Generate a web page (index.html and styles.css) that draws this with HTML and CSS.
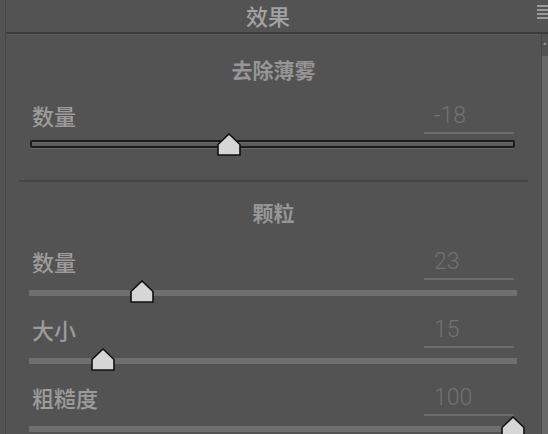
FILE: index.html
```html
<!DOCTYPE html>
<html lang="zh-CN">
<head>
<meta charset="utf-8">
<title>效果</title>
<link rel="stylesheet" href="styles.css">
</head>
<body>
<div class="app">
  <div class="side"></div>
  <div class="main">
    <header class="head">
      <h1 class="head-title">效果</h1>
      <div class="menu">
        <svg class="menu-icon" width="11" height="16" viewBox="0 0 11 16">
          <rect x="0" y="0" width="11" height="2" fill="#9a9a9a"/>
          <rect x="0" y="4" width="11" height="2" fill="#9a9a9a"/>
          <rect x="0" y="8" width="11" height="2" fill="#9a9a9a"/>
          <rect x="0" y="12" width="11" height="2" fill="#9a9a9a"/>
        </svg>
      </div>
    </header>
    <div class="body">
      <div class="content">
        <section class="group">
          <h2 class="group-title">去除薄雾</h2>
          <div class="ctl ctl-first">
            <div class="ctl-top">
              <span class="ctl-label">数量</span>
              <span class="ctl-value">-18</span>
            </div>
            <div class="slider slider-outlined">
              <div class="track track-outlined"></div>
              <svg class="thumb" style="--v:0.41" width="24" height="23" viewBox="0 0 24 23"><polygon points="12,1 23,11.5 23,22 1,22 1,11.5" fill="#d6d6d6" stroke="#111" stroke-width="1.6"/></svg>
            </div>
          </div>
        </section>
        <hr class="divider">
        <section class="group group-second">
          <h2 class="group-title">颗粒</h2>
          <div class="ctl ctl-spaced">
            <div class="ctl-top">
              <span class="ctl-label">数量</span>
              <span class="ctl-value">23</span>
            </div>
            <div class="slider">
              <div class="track"></div>
              <svg class="thumb" style="--v:0.23" width="24" height="23" viewBox="0 0 24 23"><polygon points="12,1 23,11.5 23,22 1,22 1,11.5" fill="#d6d6d6" stroke="#111" stroke-width="1.6"/></svg>
            </div>
          </div>
          <div class="ctl">
            <div class="ctl-top">
              <span class="ctl-label">大小</span>
              <span class="ctl-value">15</span>
            </div>
            <div class="slider">
              <div class="track"></div>
              <svg class="thumb" style="--v:0.15" width="24" height="23" viewBox="0 0 24 23"><polygon points="12,1 23,11.5 23,22 1,22 1,11.5" fill="#d6d6d6" stroke="#111" stroke-width="1.6"/></svg>
            </div>
          </div>
          <div class="ctl">
            <div class="ctl-top">
              <span class="ctl-label">粗糙度</span>
              <span class="ctl-value">100</span>
            </div>
            <div class="slider">
              <div class="track"></div>
              <svg class="thumb" style="--v:1" width="24" height="23" viewBox="0 0 24 23"><polygon points="12,1 23,11.5 23,22 1,22 1,11.5" fill="#d6d6d6" stroke="#111" stroke-width="1.6"/></svg>
            </div>
          </div>
        </section>
      </div>
      <div class="scroll">
        <span class="scroll-arrow"></span>
        <div class="scroll-thumb"></div>
      </div>
    </div>
  </div>
</div>
</body>
</html>
```

FILE: styles.css
```css
* { box-sizing: border-box; }

html, body {
  margin: 0;
  padding: 0;
  width: 548px;
  height: 434px;
  overflow: hidden;
  background: #535353;
  font-family: "Noto Sans CJK SC", "Noto Sans", sans-serif;
}

.app {
  display: flex;
  width: 548px;
  height: 434px;
}

.side {
  width: 6px;
  flex: none;
  border-right: 1px solid #464646;
  background: #535353;
}

.main {
  flex: 1;
  display: flex;
  flex-direction: column;
  min-width: 0;
}

.head {
  height: 34px;
  flex: none;
  display: flex;
  align-items: flex-start;
  border-bottom: 2px solid #3c3c3c;
}

.head-title {
  flex: 1;
  margin: 0;
  text-align: center;
  font-size: 22px;
  line-height: 30px;
  font-weight: 500;
  color: #a2a2a2;
}

.menu {
  width: 18px;
  flex: none;
  display: flex;
  justify-content: flex-end;
  padding-top: 5px;
}

.menu-icon { display: block; }

.body {
  flex: 1;
  display: flex;
  min-height: 0;
}

.content {
  flex: 1;
  padding-top: 22px;
  border-top: 1px solid #5a5a5a;
}

.group-title {
  margin: 0;
  text-align: center;
  font-size: 21px;
  line-height: 24px;
  font-weight: 700;
  color: #969696;
}

.ctl {
  margin-left: 23px;
  width: 488px;
  height: 68px;
}

.ctl-first {
  margin-top: 22px;
  height: 56px;
}

.ctl-spaced {
  margin-top: 25px;
}

.ctl-top {
  height: 31px;
  display: flex;
  justify-content: space-between;
  align-items: flex-start;
}

.ctl-label {
  padding-left: 3px;
  font-size: 22px;
  line-height: 24px;
  font-weight: 500;
  color: #9c9c9c;
}

.ctl-value {
  width: 90px;
  height: 31px;
  margin-right: 3px;
  padding-left: 10px;
  border-bottom: 2px solid #6c6c6c;
  font-family: Roboto, "Liberation Sans", sans-serif;
  font-weight: 300;
  font-size: 23px;
  line-height: 26px;
  color: #727272;
}

.slider {
  position: relative;
  height: 37px;
}

.slider-outlined {
  height: 25px;
}

.track {
  position: absolute;
  left: 0;
  right: 0;
  top: 10px;
  height: 6px;
  background: #6f6f6f;
}

.track-outlined {
  left: 1px;
  right: 2px;
  top: 6px;
  height: 8px;
  background: #5c5c5c;
  border: 2px solid #1b1b1b;
  border-radius: 2px;
  box-shadow: 0 1px 0 #6a6a6a, inset 0 1px 0 #6c6c6c;
}

.thumb {
  position: absolute;
  top: 0;
  left: calc(var(--v) * (100% - 6px) + 2px);
  margin-left: -12px;
  display: block;
}

.slider-outlined .thumb {
  top: -1px;
}

.divider {
  margin: 21px 0 0 13px;
  width: 509px;
  height: 2px;
  border: 0;
  background: #454545;
}

.group-second {
  padding-top: 18px;
}

.scroll {
  width: 7px;
  flex: none;
  border-left: 1px solid #464646;
  display: flex;
  flex-direction: column;
  align-items: center;
  padding-top: 8px;
}

.scroll-arrow {
  width: 0;
  height: 0;
  border-left: 2px solid transparent;
  border-right: 2px solid transparent;
  border-bottom: 3px solid #8a8a8a;
  margin-bottom: 11px;
}

.scroll-thumb {
  flex: 1;
  width: 6px;
  background: #686868;
}
```
